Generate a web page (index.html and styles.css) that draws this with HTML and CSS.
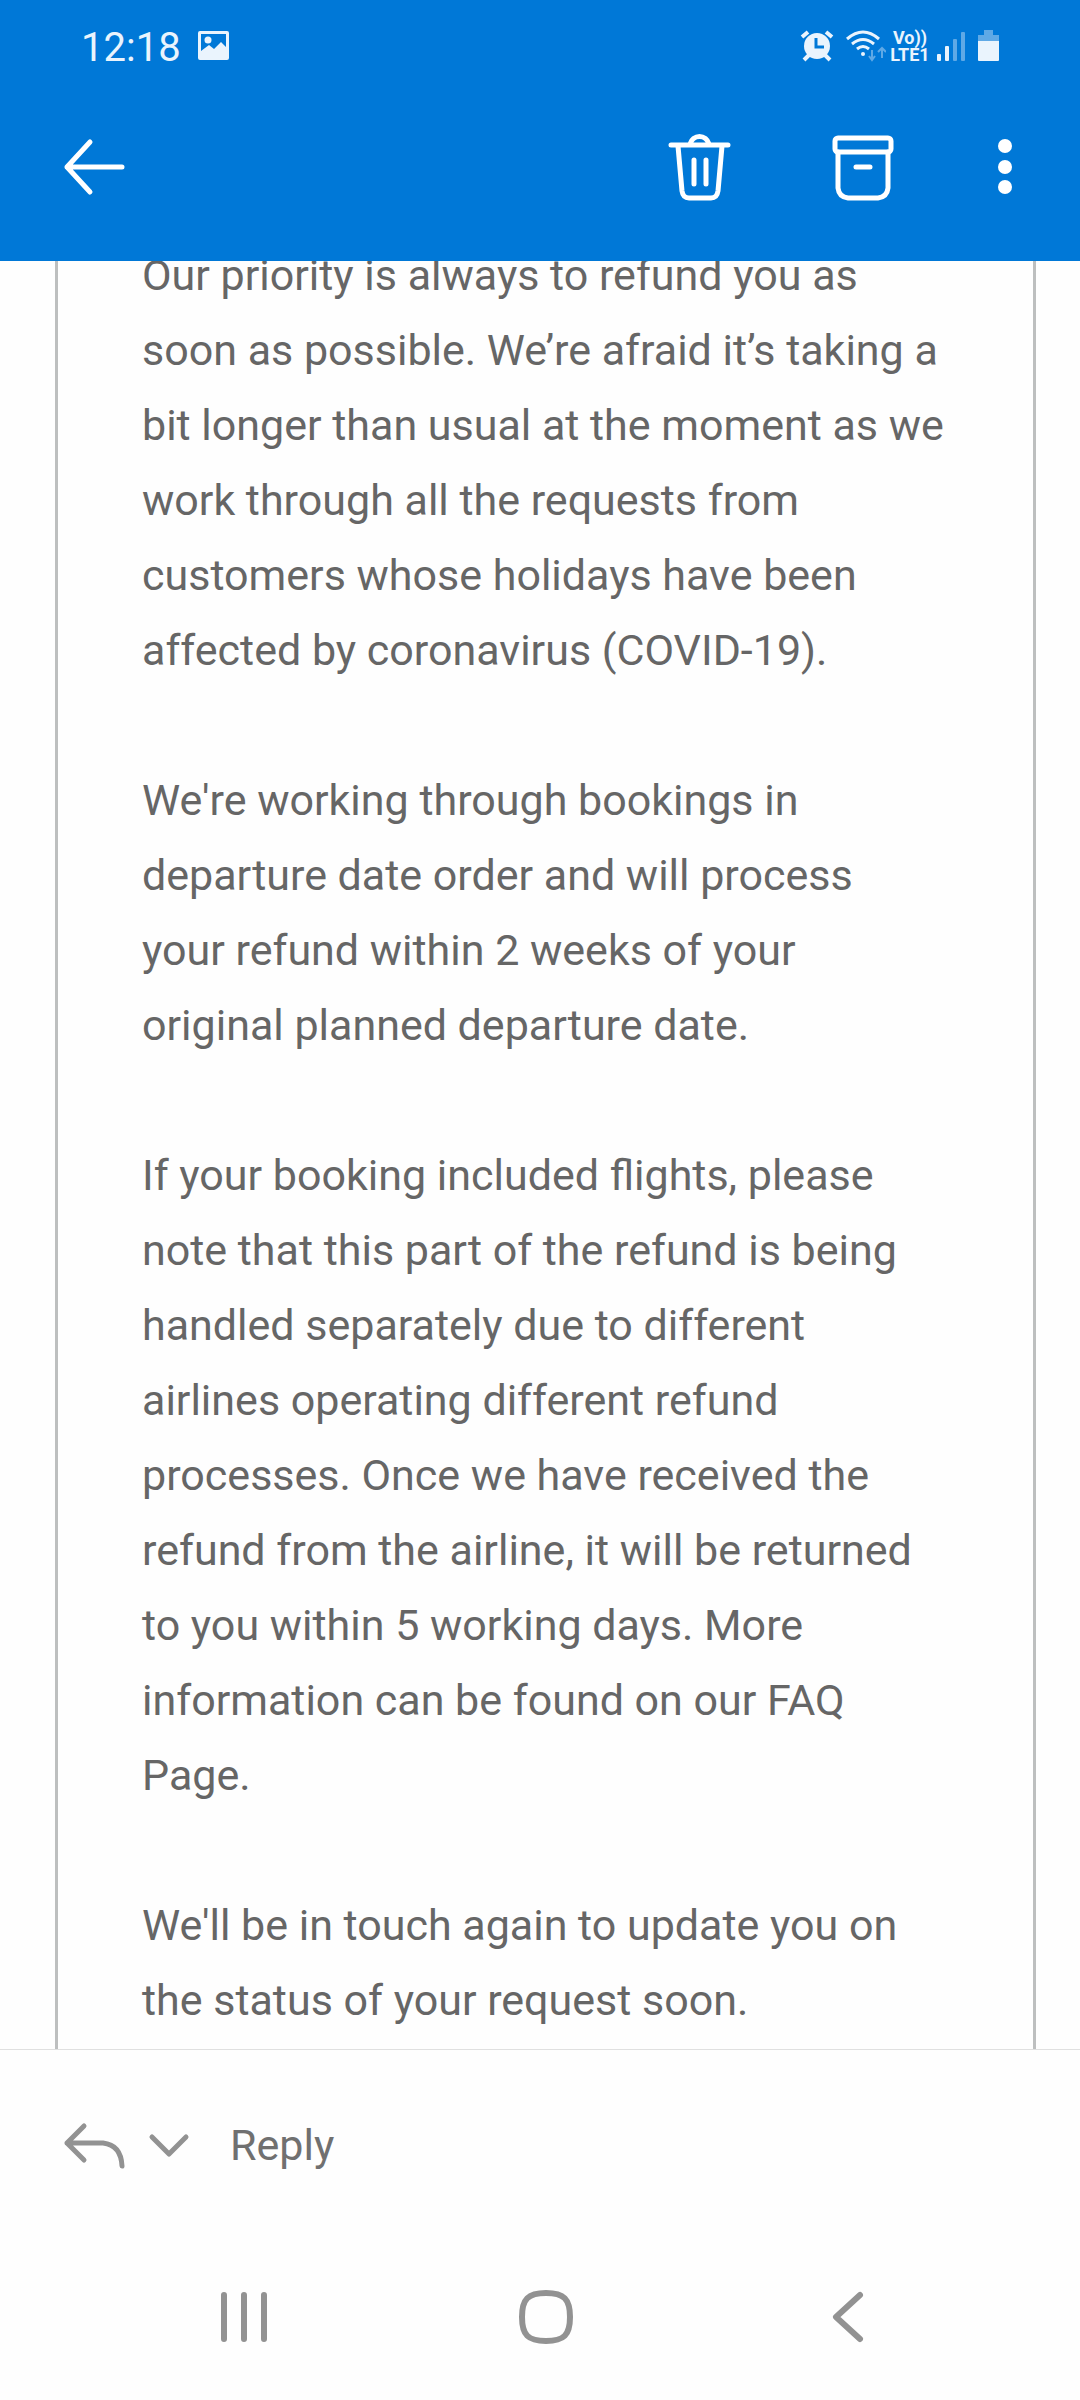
FILE: index.html
```html
<!DOCTYPE html>
<html lang="en">
<head>
  <meta charset="UTF-8" />
  <meta name="viewport" content="width=device-width, initial-scale=1" />
  <title>Mail - Refund update</title>
  <link rel="stylesheet" href="styles.css">
</head>
<body>
  <header>
    <div class="status-bar">
      <div class="status-left">
        <span class="clock">12:18</span>
        <svg width="32" height="30" viewBox="0 0 32 30">
          <path fill="#eaf4fd" fill-rule="evenodd" d="M3 0h26a2 2 0 0 1 2 2v25a2 2 0 0 1-2 2H2a2 2 0 0 1-2-2V2a2 2 0 0 1 2-2zM3 3v17l8-6 5 4 7-7 5 5V3z" />
          <circle cx="10" cy="9" r="3.5" fill="#eaf4fd" />
        </svg>
      </div>
      <div class="status-right">
        <!-- alarm -->
        <svg width="40" height="32" viewBox="0 0 40 32">
          <circle cx="19" cy="16" r="13" fill="#eaf4fd" />
          <path stroke="#eaf4fd" stroke-width="4" d="M4 7l6-5M28 2l6 5M11 25l-5 5M27 25l5 5" />
          <path fill="none" stroke="#0078d7" stroke-width="3" d="M18 8v9h8" />
        </svg>
        <!-- wifi -->
        <svg width="44" height="32" viewBox="0 0 44 32">
          <path fill="none" stroke="#eaf4fd" stroke-width="3" d="M5 9q16-14 32 0M10 14q11-9 22 0M15 19q6-5 12 0" />
          <circle cx="21" cy="24" r="2" fill="#eaf4fd" />
          <path fill="none" stroke="#5fa9e6" stroke-width="2" d="M30 20v9M27 26l3 4 3-4M40 28v-9M36 22l4-4 4 4" />
        </svg>
        <div class="volte"><span>Vo))</span><span>LTE1</span></div>
        <!-- signal -->
        <svg width="36" height="32" viewBox="0 0 36 32">
          <rect x="3" y="24" width="4" height="7" rx="1" fill="#eaf4fd" />
          <rect x="11" y="16" width="4" height="15" rx="1" fill="#eaf4fd" />
          <rect x="19" y="9" width="4" height="22" rx="1" fill="#5fa9e6" />
          <rect x="27" y="2" width="4" height="29" rx="1" fill="#5fa9e6" />
        </svg>
        <!-- battery -->
        <svg width="26" height="32" viewBox="0 0 26 32">
          <path fill="#5fa9e6" d="M10 0h9v5h6v6H4V5h6z" />
          <path fill="#eaf4fd" d="M4 11h21v19a1 1 0 0 1-1 1H5a1 1 0 0 1-1-1z" />
        </svg>
      </div>
    </div>
    <div class="toolbar">
      <button class="back" type="button" aria-label="Back">
        <svg class="icon" width="64" height="72" viewBox="0 0 64 72">
          <path d="M60 36H5M28 11L5 36l23 25" />
        </svg>
      </button>
      <button type="button" aria-label="Delete">
        <svg class="icon" width="64" height="72" viewBox="0 0 64 72">
          <path d="M9 14h51M3 14h57M22 13a10 11 0 0 1 19 0M10 15l4 45q1 7 7 7h22q6 0 7-7l4-45M26 29v24M38 29v24" />
        </svg>
      </button>
      <button type="button" aria-label="Archive">
        <svg class="icon" width="64" height="72" viewBox="0 0 64 72">
          <rect x="4" y="7" width="56" height="14" rx="3" />
          <path d="M7 21v36q1 9 10 10h30q9-1 10-10V21M25 36h14" />
        </svg>
      </button>
      <button type="button" aria-label="More options">
        <svg width="22" height="72" viewBox="0 0 22 72" fill="#fff">
          <circle cx="11" cy="15" r="7" />
          <circle cx="11" cy="36" r="7" />
          <circle cx="11" cy="56" r="7" />
        </svg>
      </button>
    </div>
  </header>

  <main>
    <article class="message">
      <p>Our priority is always to refund you as soon as possible. We’re afraid it’s taking a bit longer than usual at the moment as we work through all the requests from customers whose holidays have been affected by coronavirus (COVID-19).</p>
      <p>We're working through bookings in departure date order and will process<br> your refund within 2 weeks of your<br> original planned departure date.</p>
      <p>If your booking included flights, please note that this part of the refund is being handled separately due to different airlines operating different refund processes. Once we have received the refund from the airline, it will be returned to you within 5 working days. More information can be found on our FAQ Page.</p>
      <p>We'll be in touch again to update you on the status of your request soon.</p>
    </article>
  </main>

  <div class="reply-bar">
    <button type="button" aria-label="Reply to sender">
      <svg class="icon" width="64" height="48" viewBox="0 0 64 48">
        <path d="M22 5L5 22l17 17M5 22h36q18 2 19 23" />
      </svg>
    </button>
    <button type="button" aria-label="Reply choices">
      <svg class="icon" width="42" height="48" viewBox="0 0 42 48">
        <path d="M4 16l17 17 17-17" />
      </svg>
    </button>
    <button class="reply" type="button">Reply</button>
  </div>

  <nav class="system-nav">
    <button type="button" aria-label="Recent apps">
      <svg class="icon" width="60" height="60" viewBox="0 0 60 60">
        <path d="M10 8v44M30 8v44M50 8v44" />
      </svg>
    </button>
    <button type="button" aria-label="Home">
      <svg class="icon" width="60" height="60" viewBox="0 0 60 60">
        <path d="M30 6c18 0 24 6 24 24s-6 24-24 24S6 48 6 30 12 6 30 6z" />
      </svg>
    </button>
    <button type="button" aria-label="Go back">
      <svg class="icon" width="60" height="60" viewBox="0 0 60 60">
        <path d="M42 8L18 30l24 22" />
      </svg>
    </button>
  </nav>
</body>
</html>
```

FILE: styles.css
```css
* {
  box-sizing: border-box;
}
body {
  display: flex;
  flex-direction: column;
  height: 100vh;
  margin: 0;
  background-color: #fefefe;
  color: #666;
  font-family: Roboto, "Noto Sans", sans-serif;
  font-size: 43px;
}
svg {
  display: block;
}
button {
  padding: 0;
  border: none;
  background: none;
  color: inherit;
  font: inherit;
  cursor: pointer;
}
.icon {
  fill: none;
  stroke: #fff;
  stroke-width: 5;
  stroke-linecap: round;
  stroke-linejoin: round;
}
header {
  background-color: #0078d7;
  color: #eaf4fd;
}
.status-bar {
  display: flex;
  align-items: center;
  justify-content: space-between;
  height: 90px;
  padding: 2px 80px 0 81px;
}
.status-left,
.status-right {
  display: flex;
  align-items: center;
}
.status-left {
  gap: 17px;
}
.status-right {
  gap: 4px;
}
.clock {
  padding-top: 3px;
  font-size: 40px;
}
.volte {
  display: flex;
  flex-direction: column;
  align-items: center;
  width: 40px;
  font-size: 18px;
  font-weight: 700;
  line-height: 17px;
}
.toolbar {
  display: flex;
  align-items: center;
  gap: 99px;
  height: 171px;
  padding: 0 64px 18px 62px;
}
.back {
  margin-right: auto;
}
main {
  flex: 1;
  min-height: 0;
  overflow: hidden;
}
/* message is scrolled, first line is partly under the toolbar */
.message {
  margin: -23px 44px 0 55px;
  padding: 0 83px 75px 84px;
  border: solid #bdbfbf;
  border-width: 0 3px;
  line-height: 75px;
}
.message p {
  margin: 0;
}
.message p + p {
  margin-top: 75px;
}
.reply-bar {
  display: flex;
  align-items: center;
  gap: 22px;
  height: 193px;
  padding: 0 62px 2px;
  border-top: 1px solid #e0e0e0;
  color: #707070;
}
.reply-bar .icon,
.system-nav .icon {
  stroke: #929292;
}
.reply {
  margin-left: 18px;
}
.system-nav {
  display: flex;
  align-items: center;
  justify-content: space-around;
  height: 158px;
  padding: 0 81px 8px 93px;
}
.system-nav .icon {
  stroke-width: 6;
}
```
